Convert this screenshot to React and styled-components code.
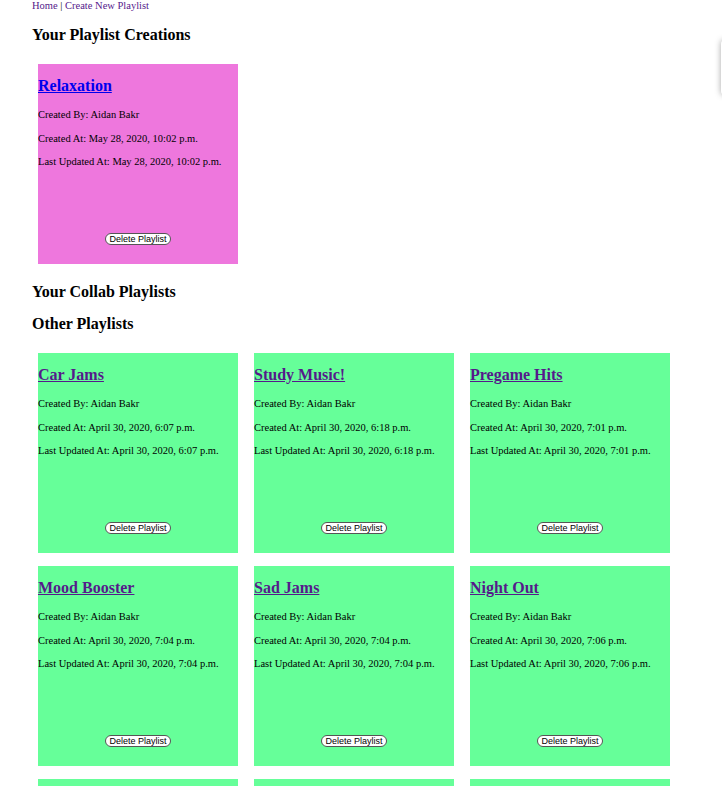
import React from "react";
import styled, { createGlobalStyle } from "styled-components";

const GlobalStyle = createGlobalStyle`
  html, body {
    margin: 0;
    padding: 0;
    overflow: hidden;
    background: #fff;
  }
  body {
    font-family: "Liberation Serif", "Times New Roman", serif;
    color: #000;
  }
`;

const Page = styled.div`
  display: flex;
  flex-direction: column;
  padding-left: 32px;
`;

const Nav = styled.div`
  font-size: 10.5px;
  line-height: 11px;
  height: 13px;
`;

const NavLink = styled.a`
  color: #551a8b;
  text-decoration: none;
`;

const Heading = styled.h3`
  margin: 12px 0 0;
  font-size: 16px;
  line-height: 20px;
  font-weight: bold;
`;

const Grid = styled.div`
  display: grid;
  grid-template-columns: repeat(3, 200px);
  column-gap: 16px;
  row-gap: 13px;
  padding-left: 6px;
  margin: 19px 0 6px;
`;

const Card = styled.div`
  height: 200px;
  display: flex;
  flex-direction: column;
  background: ${(p) => (p.$mine ? "#ee77dd" : "#66ff99")};
`;

const Title = styled.a`
  margin-top: 13px;
  font-size: 16px;
  line-height: 18px;
  font-weight: bold;
  text-decoration: underline;
  color: ${(p) => (p.$visited ? "#551a8b" : "#0000ee")};
  align-self: flex-start;
`;

const Info = styled.div`
  display: flex;
  flex-direction: column;
  gap: 11.5px;
  margin-top: 14px;
`;

const Line = styled.p`
  margin: 0;
  font-size: 10.5px;
  line-height: 12px;
`;

const DeleteButton = styled.button`
  margin: auto auto 19px;
  font-family: "Liberation Sans", Arial, sans-serif;
  font-size: 9px;
  line-height: 10px;
  padding: 0 3px;
  background: #fff;
  color: #000;
  border: 1px solid #555;
  border-radius: 7px;
`;

const EdgePanel = styled.div`
  position: fixed;
  top: 40px;
  left: 721px;
  width: 200px;
  height: 55px;
  background: #fff;
  border-radius: 4px;
  box-shadow: 0 0 6px rgba(0, 0, 0, 0.35);
`;

const mine = [
  {
    name: "Relaxation",
    created: "May 28, 2020, 10:02 p.m.",
    updated: "May 28, 2020, 10:02 p.m.",
  },
];

const others = [
  { name: "Car Jams", created: "April 30, 2020, 6:07 p.m.", updated: "April 30, 2020, 6:07 p.m." },
  { name: "Study Music!", created: "April 30, 2020, 6:18 p.m.", updated: "April 30, 2020, 6:18 p.m." },
  { name: "Pregame Hits", created: "April 30, 2020, 7:01 p.m.", updated: "April 30, 2020, 7:01 p.m." },
  { name: "Mood Booster", created: "April 30, 2020, 7:04 p.m.", updated: "April 30, 2020, 7:04 p.m." },
  { name: "Sad Jams", created: "April 30, 2020, 7:04 p.m.", updated: "April 30, 2020, 7:04 p.m." },
  { name: "Night Out", created: "April 30, 2020, 7:06 p.m.", updated: "April 30, 2020, 7:06 p.m." },
  { name: "Road Trip", created: "April 30, 2020, 7:08 p.m.", updated: "April 30, 2020, 7:08 p.m." },
  { name: "Workout", created: "April 30, 2020, 7:10 p.m.", updated: "April 30, 2020, 7:10 p.m." },
  { name: "Chill Vibes", created: "April 30, 2020, 7:12 p.m.", updated: "April 30, 2020, 7:12 p.m." },
];

const PlaylistCard = ({ playlist, isMine }) => (
  <Card $mine={isMine}>
    <Title href="#" $visited={!isMine}>
      {playlist.name}
    </Title>
    <Info>
      <Line>Created By: Aidan Bakr</Line>
      <Line>Created At: {playlist.created}</Line>
      <Line>Last Updated At: {playlist.updated}</Line>
    </Info>
    <DeleteButton>Delete Playlist</DeleteButton>
  </Card>
);

const App = () => {
  return (
    <>
      <GlobalStyle />
      <Page>
        <Nav>
          <NavLink href="#">Home</NavLink> | <NavLink href="#">Create New Playlist</NavLink>
        </Nav>
        <Heading>Your Playlist Creations</Heading>
        <Grid>
          {mine.map((p) => (
            <PlaylistCard key={p.name} playlist={p} isMine />
          ))}
        </Grid>
        <Heading>Your Collab Playlists</Heading>
        <Heading>Other Playlists</Heading>
        <Grid>
          {others.map((p) => (
            <PlaylistCard key={p.name} playlist={p} />
          ))}
        </Grid>
      </Page>
      <EdgePanel />
    </>
  );
};

export default App;
